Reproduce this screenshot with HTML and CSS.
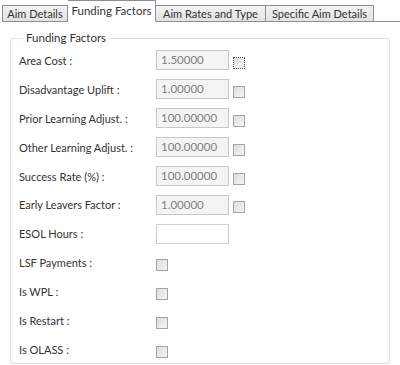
FILE: index.html
```html
<!DOCTYPE html>
<html lang="en">
<head>
    <meta charset="UTF-8">
    <title>Funding Factors</title>
    <link rel="stylesheet" href="styles.css">
</head>
<body>
    <div class="tabs">
        <div class="tab t1">Aim Details</div>
        <div class="tab t2 active">Funding Factors</div>
        <div class="tab t3">Aim Rates and Type</div>
        <div class="tab t4">Specific Aim Details</div>
        <div class="tab-rest"></div>
    </div>
    <div class="panel">
        <fieldset class="group">
            <legend>Funding Factors</legend>
            <div class="row">
                <span class="label">Area Cost :</span>
                <span class="box">1.50000</span>
                <span class="check focus"></span>
            </div>
            <div class="row">
                <span class="label">Disadvantage Uplift :</span>
                <span class="box">1.00000</span>
                <span class="check"></span>
            </div>
            <div class="row">
                <span class="label">Prior Learning Adjust. :</span>
                <span class="box">100.00000</span>
                <span class="check"></span>
            </div>
            <div class="row">
                <span class="label">Other Learning Adjust. :</span>
                <span class="box">100.00000</span>
                <span class="check"></span>
            </div>
            <div class="row">
                <span class="label">Success Rate (%) :</span>
                <span class="box">100.00000</span>
                <span class="check"></span>
            </div>
            <div class="row">
                <span class="label">Early Leavers Factor :</span>
                <span class="box">1.00000</span>
                <span class="check"></span>
            </div>
            <div class="row">
                <span class="label">ESOL Hours :</span>
                <span class="box edit"></span>
            </div>
            <div class="row">
                <span class="label">LSF Payments :</span>
                <span class="check"></span>
            </div>
            <div class="row">
                <span class="label">Is WPL :</span>
                <span class="check"></span>
            </div>
            <div class="row">
                <span class="label">Is Restart :</span>
                <span class="check"></span>
            </div>
            <div class="row">
                <span class="label">Is OLASS :</span>
                <span class="check"></span>
            </div>
        </fieldset>
    </div>
</body>
</html>
```

FILE: styles.css
```css
*,
*:after,
*:before
{
    margin: 0;
    padding: 0;
    box-sizing: border-box;
}
body
{
    width: 400px;
    height: 365px;
    background: #fff;
    font-family: Lato, sans-serif;
    font-size: 11px;
    color: #333;
    overflow: hidden;
}
.tabs
{
    display: flex;
    align-items: flex-end;
    height: 22px;
    padding-left: 2px;
}
.tab
{
    height: 17px;
    line-height: 15px;
    text-align: center;
    border: 1px solid #8c8e94;
    border-left: none;
    background: linear-gradient(#f3f3f3, #e2e2e2);
    white-space: nowrap;
}
.t1 { width: 66px; border-left: 1px solid #8c8e94; }
.t2 { width: 88px; }
.t3 { width: 110px; }
.t4 { width: 108px; }
.tab.active
{
    height: 22px;
    line-height: 19px;
    font-size: 11.5px;
    background: #fff;
    border-bottom-color: #fff;
}
.tab-rest
{
    flex: 1;
    border-bottom: 1px solid #8c8e94;
}
.panel
{
    padding: 8px 10px 0 10px;
}
.group
{
    border: 1px solid #d5dfe5;
    border-radius: 3px;
    padding: 0 0 0 8px;
    height: 334px;
}
.group legend
{
    margin-left: 4px;
    padding: 0 3px;
    line-height: 16px;
    font-size: 11.5px;
}
.row
{
    display: flex;
    align-items: center;
    height: 28.9px;
}
.label
{
    width: 137px;
}
.box
{
    width: 73px;
    height: 20px;
    border: 1px solid #c8c8c8;
    background: #f4f4f4;
    color: #808080;
    padding: 0 4px;
    line-height: 18px;
    font-size: 11.5px;
}
.box.edit
{
    background: #fff;
    border-color: #c4d2dc;
}
.check
{
    width: 12px;
    height: 12px;
    border: 1px solid #a4a4a4;
    background: linear-gradient(135deg, #dcdcdc, #f6f6f6);
    margin-top: 5px;
}
.box + .check
{
    margin-left: 4px;
}
.check.focus
{
    border: 1px dotted #555;
}
```
